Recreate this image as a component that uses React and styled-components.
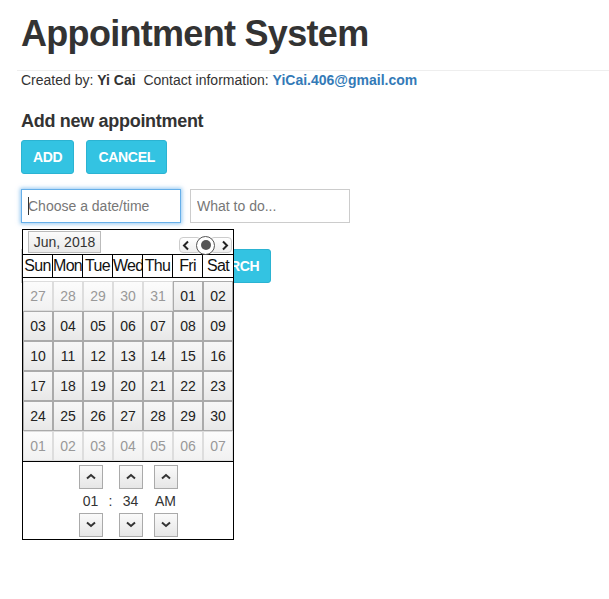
import React from "react";
import styled, { createGlobalStyle } from "styled-components";

const Global = createGlobalStyle`
  html, body { margin: 0; padding: 0; background: #fff; height: 100%; }
  #root { min-height: 100%; }
  body { font-family: "Liberation Sans", Arial, sans-serif; color: #333; font-size: 14px; }
  * { box-sizing: border-box; }
`;

const Page = styled.div`
  min-height: 599px;
  padding: 0 0 40px 21px;
`;

const Header = styled.div`
  margin-left: -4px;
  padding-left: 4px;
  border-bottom: 1px solid #eee;
  padding-bottom: 16px;
`;

const Title = styled.h1`
  margin: 14px 0 0;
  font-size: 36px;
  font-weight: 700;
  letter-spacing: -0.7px;
  line-height: 1.1;
  color: #333;
`;

const Credits = styled.p`
  margin: -1px 0 0;
  font-size: 14px;
  line-height: 20px;
  b { font-weight: 700; }
  a { color: #337ab7; font-weight: 700; text-decoration: none; }
`;

const Section = styled.h4`
  margin: 21px 0 0;
  font-size: 18px;
  font-weight: 700;
  letter-spacing: -0.3px;
  line-height: 20px;
`;

const ButtonRow = styled.div`
  display: flex;
  gap: 12px;
  margin-top: 9px;
`;

const Btn = styled.button`
  height: 34px;
  padding: 0 11px;
  font-family: inherit;
  font-size: 14px;
  font-weight: 700;
  letter-spacing: -0.3px;
  color: #fff;
  background: #33c3e2;
  border: 1px solid #2bb3d2;
  border-radius: 3px;
`;

const FieldRow = styled.div`
  display: flex;
  gap: 9px;
  margin-top: ${p => p.$top}px;
  position: relative;
  z-index: ${p => p.$z || 0};
`;

const FieldWrap = styled.div`
  position: relative;
`;

const Input = styled.input`
  width: 160px;
  height: 34px;
  padding: 6px 6px;
  font-family: inherit;
  font-size: 14px;
  color: #555;
  border: 1px solid ${p => (p.$focus ? "#66afe9" : "#ccc")};
  box-shadow: ${p => (p.$focus ? "0 0 4px 1px rgba(102,175,233,.7)" : "none")};
  border-radius: 0;
  outline: none;
  &::placeholder { color: #777; }
`;

const Caret = styled.span`
  position: absolute;
  left: 7px;
  top: 8px;
  width: 1px;
  height: 18px;
  background: #333;
`;

const Popup = styled.div`
  position: absolute;
  top: 40px;
  left: 1px;
  width: 212px;
  background: #fff;
  border: 1px solid #000;
  z-index: 5;
`;

const CalHead = styled.div`
  display: flex;
  align-items: flex-start;
  justify-content: space-between;
  height: 24px;
  padding: 1px 1px 0 5px;
`;

const MonthBtn = styled.div`
  width: 73px;
  height: 22px;
  border: 1px solid #bbb;
  background: linear-gradient(#fbfbfb, #e9e9e9);
  font-size: 14px;
  line-height: 20px;
  text-align: center;
  color: #333;
`;

const Nav = styled.div`
  display: flex;
  align-items: center;
  margin-top: 5px;
  position: relative;
`;

const NavBtn = styled.div`
  width: 22px;
  height: 16px;
  border: 1px solid #ccc;
  border-radius: 4px;
  background: linear-gradient(#fff, #eee);
  display: flex;
  align-items: center;
  justify-content: ${p => (p.$left ? "flex-start" : "flex-end")};
  padding: 0 2px;
`;

const Dot = styled.div`
  width: 19px;
  height: 19px;
  border-radius: 50%;
  border: 1.5px solid #555;
  background: #fff;
  display: flex;
  align-items: center;
  justify-content: center;
  margin: 0 -5px;
  position: relative;
  z-index: 1;
  &::after {
    content: "";
    width: 10px;
    height: 10px;
    border-radius: 50%;
    background: #555;
  }
`;

const WeekRow = styled.div`
  display: grid;
  grid-template-columns: repeat(7, 30px);
  border-top: 1px solid #000;
  border-bottom: 1px solid #000;
`;

const WeekCell = styled.div`
  height: 22px;
  font-size: 16px;
  letter-spacing: -0.7px;
  line-height: 22px;
  text-align: center;
  overflow: hidden;
  white-space: nowrap;
  border-right: ${p => (p.$last ? "none" : "1px solid #000")};
  color: #111;
`;

const DayGrid = styled.div`
  display: grid;
  grid-template-columns: repeat(7, 30px);
  margin-top: 3px;
  border-bottom: 1px solid #000;
`;

const Day = styled.div`
  height: 30px;
  border: 1px solid ${p => (p.$other ? "#ddd" : "#aaa")};
  background: ${p => (p.$other ? "linear-gradient(#fcfcfc, #f1f1f1)" : "linear-gradient(#f7f7f7, #e8e8e8)")};
  color: ${p => (p.$other ? "#999" : "#222")};
  font-size: 14px;
  line-height: 28px;
  text-align: center;
`;

const TimeBox = styled.div`
  display: flex;
  justify-content: center;
  padding: 3px 0 2px;
`;

const TimeCol = styled.div`
  display: flex;
  flex-direction: column;
  align-items: center;
  width: ${p => p.$w}px;
  margin-left: ${p => p.$ml || 0}px;
`;

const Spin = styled.div`
  width: 24px;
  height: 24px;
  border: 1px solid #aaa;
  background: linear-gradient(#fafafa, #e6e6e6);
  display: flex;
  align-items: center;
  justify-content: center;
`;

const Spacer = styled.div`
  height: 24px;
`;

const TimeVal = styled.div`
  height: 24px;
  line-height: 24px;
  font-size: 14px;
  color: #333;
`;

const Chev = ({ up }) => (
  <svg width="12" height="7" viewBox="0 0 12 7">
    <polyline
      points={up ? "2,5.5 6,2 10,5.5" : "2,1.5 6,5 10,1.5"}
      fill="none"
      stroke="#333"
      strokeWidth="2"
    />
  </svg>
);

const Arrow = ({ left }) => (
  <svg width="8" height="11" viewBox="0 0 8 11">
    <polyline
      points={left ? "6,1.5 2,5.5 6,9.5" : "2,1.5 6,5.5 2,9.5"}
      fill="none"
      stroke="#222"
      strokeWidth="2"
    />
  </svg>
);

const weekDays = ["Sun", "Mon", "Tue", "Wed", "Thu", "Fri", "Sat"];

const days = [
  ...[27, 28, 29, 30, 31].map(d => ({ d: String(d), o: true })),
  ...Array.from({ length: 30 }, (_, i) => ({ d: String(i + 1).padStart(2, "0"), o: false })),
  ...Array.from({ length: 7 }, (_, i) => ({ d: String(i + 1).padStart(2, "0"), o: true })),
];

export default function App() {
  return (
    <Page>
      <Global />
      <Header>
        <Title>Appointment System</Title>
      </Header>
      <Credits>
        Created by: <b>Yi Cai</b>&nbsp; Contact information: <a href="#">YiCai.406@gmail.com</a>
      </Credits>
      <Section>Add new appointment</Section>
      <ButtonRow>
        <Btn>ADD</Btn>
        <Btn>CANCEL</Btn>
      </ButtonRow>
      <FieldRow $top={15} $z={2}>
        <FieldWrap>
          <Input $focus placeholder="Choose a date/time" />
          <Caret />
          <Popup>
            <CalHead>
              <MonthBtn>Jun, 2018</MonthBtn>
              <Nav>
                <NavBtn $left><Arrow left /></NavBtn>
                <Dot />
                <NavBtn><Arrow /></NavBtn>
              </Nav>
            </CalHead>
            <WeekRow>
              {weekDays.map((w, i) => (
                <WeekCell key={w} $last={i === 6}>{w}</WeekCell>
              ))}
            </WeekRow>
            <DayGrid>
              {days.map((x, i) => (
                <Day key={i} $other={x.o}>{x.d}</Day>
              ))}
            </DayGrid>
            <TimeBox>
              <TimeCol $w={24}>
                <Spin><Chev up /></Spin>
                <TimeVal>01</TimeVal>
                <Spin><Chev /></Spin>
              </TimeCol>
              <TimeCol $w={16}>
                <Spacer />
                <TimeVal>:</TimeVal>
              </TimeCol>
              <TimeCol $w={24}>
                <Spin><Chev up /></Spin>
                <TimeVal>34</TimeVal>
                <Spin><Chev /></Spin>
              </TimeCol>
              <TimeCol $w={24} $ml={11}>
                <Spin><Chev up /></Spin>
                <TimeVal>AM</TimeVal>
                <Spin><Chev /></Spin>
              </TimeCol>
            </TimeBox>
          </Popup>
        </FieldWrap>
        <Input placeholder="What to do..." />
      </FieldRow>
      <FieldRow $top={26} $z={1}>
        <Input placeholder="Search" />
        <Btn>SEARCH</Btn>
      </FieldRow>
    </Page>
  );
}
